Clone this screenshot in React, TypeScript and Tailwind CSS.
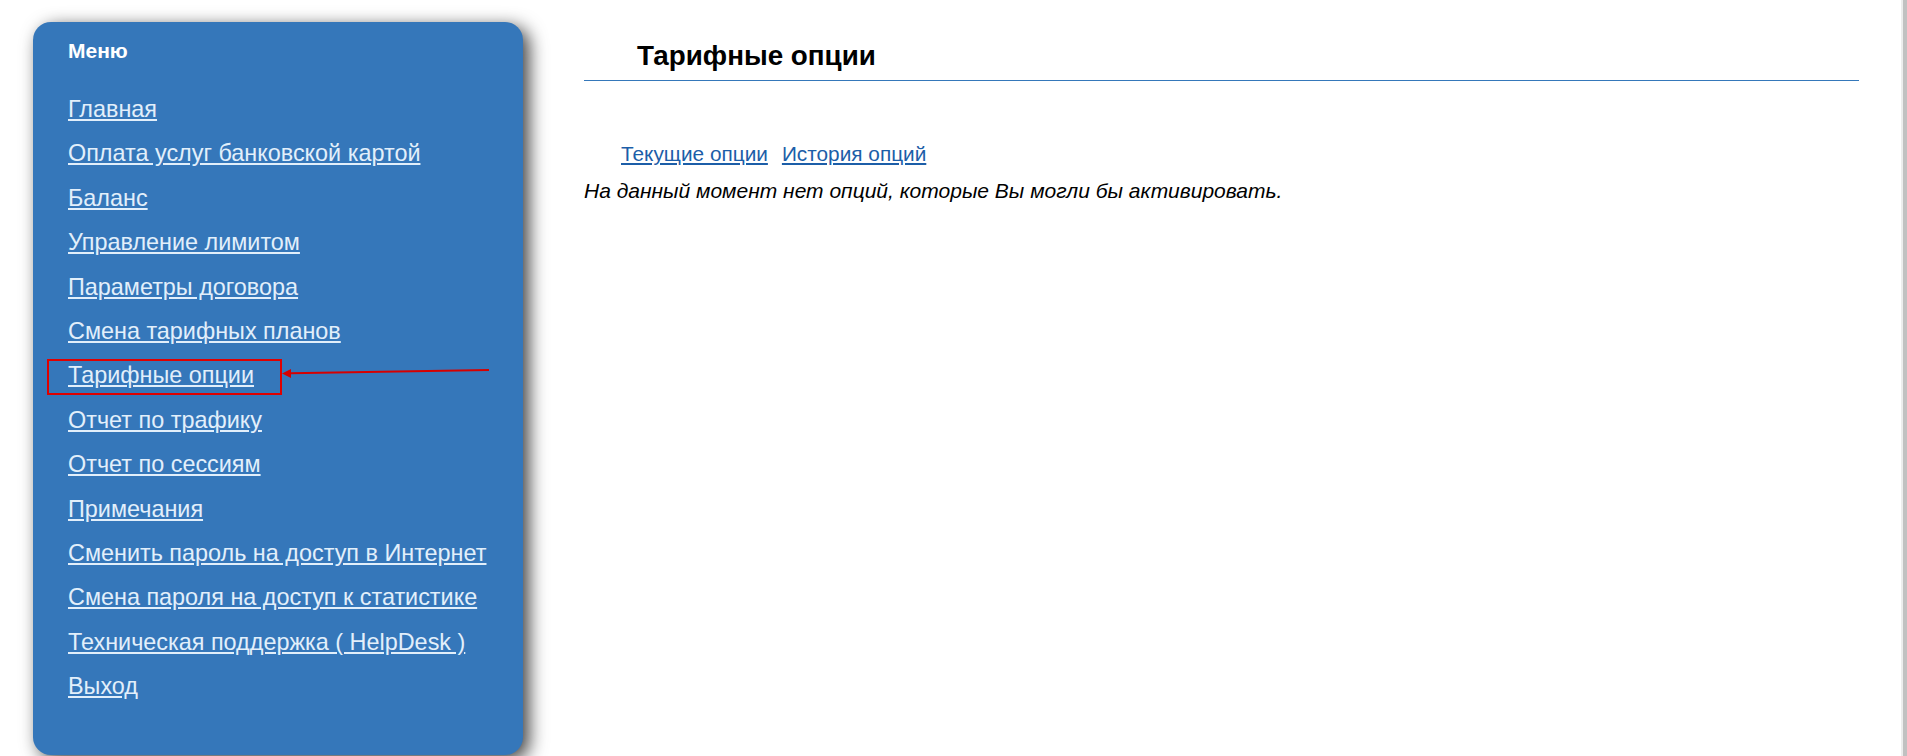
import React from 'react'

const menu = [
  'Главная',
  'Оплата услуг банковской картой',
  'Баланс',
  'Управление лимитом',
  'Параметры договора',
  'Смена тарифных планов',
  'Тарифные опции',
  'Отчет по трафику',
  'Отчет по сессиям',
  'Примечания',
  'Сменить пароль на доступ в Интернет',
  'Смена пароля на доступ к статистике',
  'Техническая поддержка ( HelpDesk )',
  'Выход',
]

function Sidebar() {
  return (
    <div className="relative mt-[22px] ml-[33px] h-[733px] w-[490px] shrink-0 rounded-[18px] bg-[#3577ba] pt-[17px] pl-[35px] shadow-[6px_5px_18px_rgba(0,0,0,0.75)]">
      <div className="text-[21px] leading-[24px] font-bold text-white">Меню</div>
      <ul className="mt-[24px]">
        {menu.map((item) => (
          <li key={item} className="text-[23.4px] leading-[44.4px]">
            <a href="#" className="text-[#e2effb] underline">
              {item}
            </a>
          </li>
        ))}
      </ul>

      {/* annotation: red frame + arrow */}
      <div className="pointer-events-none absolute top-[337px] left-[14px] h-[36px] w-[235px] border-2 border-[#e00000]" />
      <svg
        className="pointer-events-none absolute top-[340px] left-[249px]"
        width="220"
        height="22"
        viewBox="0 0 220 22"
      >
        <line x1="8" y1="11.2" x2="207" y2="8" stroke="#d60000" strokeWidth="2" />
        <polygon points="0,11.5 9,7 9,16" fill="#d60000" />
      </svg>
    </div>
  )
}

export default function App() {
  return (
    <div
      className="flex h-[756px] w-full overflow-hidden bg-white text-black"
      style={{ fontFamily: '"Liberation Sans", Arial, sans-serif' }}
    >
      <Sidebar />
      <main className="ml-[61px] flex-1 pt-[41px]">
        <div className="border-b border-[#3578ba] pb-[9px] pl-[53px]">
          <h1 className="text-[27.8px] leading-[30px] font-bold">Тарифные опции</h1>
        </div>
        <div className="mt-[60px] flex gap-[14px] pl-[37px] text-[20.8px] leading-[26px]">
          <a href="#" className="text-[#1c5ea8] underline">
            Текущие опции
          </a>
          <a href="#" className="text-[#1c5ea8] underline">
            История опций
          </a>
        </div>
        <p className="mt-[11px] text-[21px] leading-[26px] italic">
          На данный момент нет опций, которые Вы могли бы активировать.
        </p>
      </main>
      <div className="ml-[42px] flex h-full w-[6px] shrink-0">
        <div className="w-[2px] bg-[#ededed]" />
        <div className="w-[4px] bg-[#c1c1c1]" />
      </div>
    </div>
  )
}
